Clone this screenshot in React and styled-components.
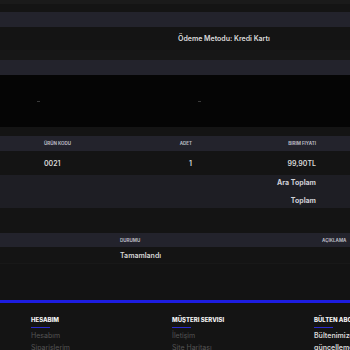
import styled, { createGlobalStyle } from 'styled-components'

const Global = createGlobalStyle`
  body {
    margin: 0;
    background: #141414;
    font-family: Inter, "Open Sans", sans-serif;
  }
`

const Page = styled.div`
  width: 350px;
  height: 350px;
  overflow: hidden;
  background: #141414;
  display: flex;
  flex-direction: column;
`

const Strip = styled.div`
  height: ${(p) => p.h}px;
  flex-shrink: 0;
  background: ${(p) => p.bg || '#141414'};
`

const InfoRow = styled.div`
  height: 23px;
  flex-shrink: 0;
  display: flex;
  align-items: center;
  padding-left: 178px;
  color: #dcdcdc;
  font-size: 7px;
  font-weight: 600;
  white-space: nowrap;
`

const BlackBox = styled.div`
  height: 52px;
  flex-shrink: 0;
  background: #050505;
  display: flex;
  align-items: center;
  padding-left: 37px;
  gap: 158px;
`

const Mark = styled.span`
  width: 3px;
  height: 1px;
  background: #3a3a3a;
`

const Grid = styled.div`
  display: grid;
  grid-template-columns: ${(p) => p.cols};
  align-items: center;
  flex-shrink: 0;
  height: ${(p) => p.h}px;
  background: ${(p) => p.bg || '#141414'};
  white-space: nowrap;
`

const Head = styled.span`
  font-size: 4.5px;
  font-weight: 700;
  color: #b8b8c0;
  text-transform: uppercase;
  text-align: ${(p) => (p.right ? 'right' : 'left')};
`

const Cell = styled.span`
  font-size: 7px;
  font-weight: 600;
  color: #d8d8d8;
  text-align: ${(p) => (p.right ? 'right' : 'left')};
`

const Totals = styled.div`
  height: 33px;
  flex-shrink: 0;
  background: #1e1e24;
  display: flex;
  flex-direction: column;
  align-items: flex-end;
  justify-content: center;
  gap: 9px;
  padding-right: 34px;
  color: #d0d0d8;
  font-size: 7px;
  font-weight: 700;
`

const BlueLine = styled.div`
  height: 3px;
  flex-shrink: 0;
  background: #1d1de0;
`

const Footer = styled.footer`
  display: grid;
  grid-template-columns: 141px 142px 1fr;
  padding: 13px 0 0 31px;
  white-space: nowrap;
`

const FooterCol = styled.div`
  display: flex;
  flex-direction: column;
`

const FooterTitle = styled.h4`
  margin: 0;
  font-size: 6px;
  font-weight: 800;
  color: #f2f2f2;
  text-transform: uppercase;
  &::after {
    content: '';
    display: block;
    width: 19px;
    height: 1px;
    background: #2a2acc;
    margin-top: 4px;
  }
`

const FooterLink = styled.a`
  font-size: 7px;
  color: #555;
  line-height: 12px;
  margin-top: ${(p) => (p.first ? '2px' : '0')};
`

const FooterText = styled.p`
  margin: 2px 0 0;
  font-size: 7px;
  font-weight: 600;
  color: #d8d8d8;
  line-height: 12px;
`

export default function App() {
  return (
    <Page>
      <Global />
      <Strip h={4} bg="#1a1a1a" />
      <Strip h={8} />
      <Strip h={15} bg="#23232c" />
      <InfoRow>Ödeme Metodu: Kredi Kartı</InfoRow>
      <Strip h={10} bg="#171717" />
      <Strip h={15} bg="#23232c" />
      <BlackBox>
        <Mark />
        <Mark />
      </BlackBox>
      <Strip h={9} />
      <Grid h={15} bg="#23232c" cols="44px 100px 48px 124px 34px">
        <span />
        <Head>Ürün Kodu</Head>
        <Head right>Adet</Head>
        <Head right>Birim Fiyatı</Head>
      </Grid>
      <Grid h={24} cols="44px 100px 48px 124px 34px">
        <span />
        <Cell>0021</Cell>
        <Cell right>1</Cell>
        <Cell right>99,90TL</Cell>
      </Grid>
      <Totals>
        <span>Ara Toplam</span>
        <span>Toplam</span>
      </Totals>
      <Strip h={25} />
      <Grid h={14} bg="#23232c" cols="120px 202px 1fr">
        <span />
        <Head>Durumu</Head>
        <Head>Açıklama</Head>
      </Grid>
      <Grid h={16} cols="120px 202px 1fr">
        <span />
        <Cell>Tamamlandı</Cell>
        <span />
      </Grid>
      <Strip h={1} bg="#181818" />
      <Strip h={36} bg="#131313" />
      <BlueLine />
      <Footer>
        <FooterCol>
          <FooterTitle>Hesabım</FooterTitle>
          <FooterLink first>Hesabım</FooterLink>
          <FooterLink>Siparişlerim</FooterLink>
        </FooterCol>
        <FooterCol>
          <FooterTitle>Müşteri Servisi</FooterTitle>
          <FooterLink first>İletişim</FooterLink>
          <FooterLink>Site Haritası</FooterLink>
        </FooterCol>
        <FooterCol>
          <FooterTitle>Bülten Aboneliği</FooterTitle>
          <FooterText>
            Bültenimize abone olun
            <br />
            güncellemeleri kaçırmayın
          </FooterText>
        </FooterCol>
      </Footer>
    </Page>
  )
}
